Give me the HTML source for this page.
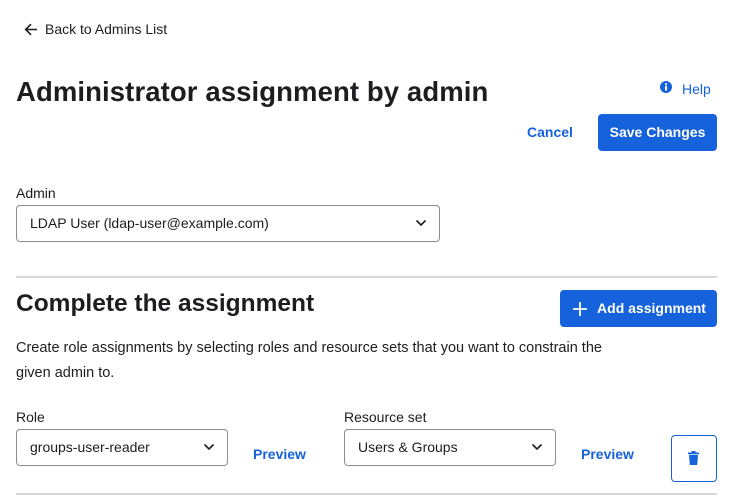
<!DOCTYPE html>
<html><head><style>
*{margin:0;padding:0;box-sizing:border-box}
body{width:731px;height:499px;background:#fff;font-family:"Liberation Sans",sans-serif;color:#1d1d21;position:relative;overflow:hidden}
.a{position:absolute;white-space:nowrap}
.sel{position:absolute;border:1px solid #8c8c96;border-radius:4px;height:37px;font-size:14px;line-height:35px;padding-left:13px;color:#1d1d21}
.sel svg{position:absolute;right:12px;top:13px}
.btn{position:absolute;background:#1662dd;color:#fff;border-radius:4px;font-weight:bold;font-size:14px;text-align:center}
.link{color:#1662dd;font-size:14px;font-weight:bold}
hr{position:absolute;border:0;height:2px;background:#d7d7dc;left:16px;width:701px}
</style></head><body>
<svg class="a" style="left:24px;top:23px" width="14" height="13" viewBox="0 0 14 13"><path d="M13 6.5H2M7 1.2L1.7 6.5 7 11.8" stroke="#1d1d21" stroke-width="1.6" fill="none"/></svg>
<div class="a" style="left:45px;top:21px;font-size:14px">Back to Admins List</div>
<div class="a" style="left:16px;top:76px;font-size:27.5px;font-weight:bold;letter-spacing:0.1px">Administrator assignment by admin</div>
<svg class="a" style="left:660px;top:81px" width="12" height="12" viewBox="0 0 12 12"><circle cx="6" cy="6" r="6" fill="#1662dd"/><rect x="5" y="5" width="2" height="4.5" fill="#fff"/><circle cx="6" cy="3.2" r="1.1" fill="#fff"/></svg>
<div class="a" style="left:682px;top:81px;font-size:14px;color:#1662dd">Help</div>
<div class="a link" style="left:527px;top:124px">Cancel</div>
<div class="btn" style="left:598px;top:114px;width:119px;height:37px;line-height:37px">Save Changes</div>
<div class="a" style="left:16px;top:185px;font-size:14px">Admin</div>
<div class="sel" style="left:16px;top:205px;width:424px">LDAP User (ldap-user@example.com)<svg width="12" height="8" viewBox="0 0 12 8"><path d="M1.5 1.5L6 6l4.5-4.5" stroke="#1d1d21" stroke-width="1.6" fill="none"/></svg></div>
<hr style="top:276px">
<div class="a" style="left:16px;top:290px;font-size:24.5px;font-weight:bold">Complete the assignment</div>
<div class="btn" style="left:560px;top:290px;width:157px;height:37px;line-height:37px;padding-left:26px">Add assignment</div>
<svg class="a" style="left:573px;top:302px" width="14" height="14" viewBox="0 0 14 14"><path d="M7 0V14M0 7H14" stroke="#fff" stroke-width="1.8"/></svg>
<div class="a" style="left:16px;top:336px;font-size:14.5px;line-height:25px;white-space:normal;width:612px">Create role assignments by selecting roles and resource sets that you want to constrain the given admin to.</div>
<div class="a" style="left:16px;top:409px;font-size:14px">Role</div>
<div class="sel" style="left:16px;top:429px;width:212px">groups-user-reader<svg width="12" height="8" viewBox="0 0 12 8"><path d="M1.5 1.5L6 6l4.5-4.5" stroke="#1d1d21" stroke-width="1.6" fill="none"/></svg></div>
<div class="a link" style="left:253px;top:446px">Preview</div>
<div class="a" style="left:344px;top:409px;font-size:14px">Resource set</div>
<div class="sel" style="left:344px;top:429px;width:212px">Users &amp; Groups<svg width="12" height="8" viewBox="0 0 12 8"><path d="M1.5 1.5L6 6l4.5-4.5" stroke="#1d1d21" stroke-width="1.6" fill="none"/></svg></div>
<div class="a link" style="left:581px;top:446px">Preview</div>
<div class="a" style="left:671px;top:435px;width:46px;height:47px;border:1px solid #1662dd;border-radius:4px"></div>
<svg class="a" style="left:688px;top:451px" width="11" height="14" viewBox="0 0 11 14"><rect x="0" y="1.5" width="11" height="1.8" fill="#1662dd"/><rect x="3.5" y="0" width="4" height="2" fill="#1662dd"/><path d="M1 4h9l-.8 10H1.8z" fill="#1662dd"/></svg>
<hr style="top:493px">
</body></html>
